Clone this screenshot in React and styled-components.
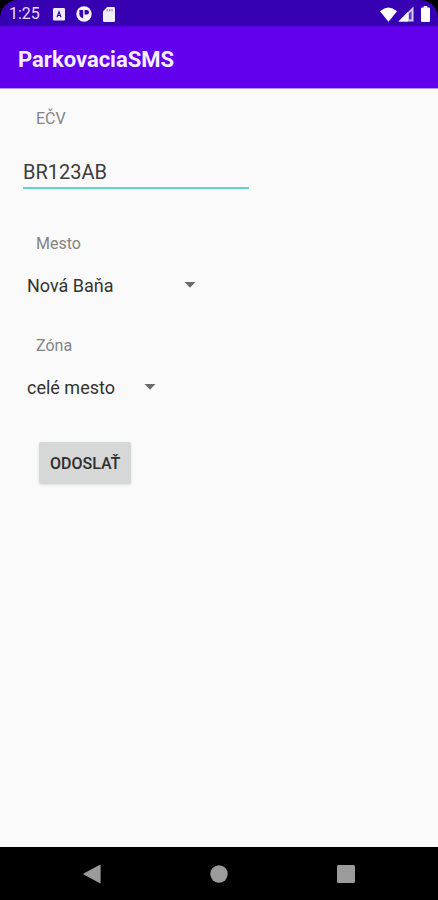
import React from "react";
import styled, { createGlobalStyle } from "styled-components";

const cities = ["Nová Baňa", "Bratislava", "Žilina"];
const zones = ["celé mesto"];

export const App = () => {
  const [plate, setPlate] = React.useState("BR123AB");
  const [city, setCity] = React.useState(cities[0]);
  const [zone, setZone] = React.useState(zones[0]);

  return (
    <Screen>
      <GlobalStyle />
      <StatusBar>
        <Clock>1:25</Clock>
        <Notifications>
          <KeyboardIcon />
          <PIcon />
          <SdCardIcon />
        </Notifications>
        <SystemIcons>
          <WifiIcon />
          <SignalIcon />
          <BatteryIcon />
        </SystemIcons>
      </StatusBar>
      <AppBar>
        <Title>ParkovaciaSMS</Title>
      </AppBar>

      <Form onSubmit={event => event.preventDefault()}>
        <Field>
          <Label htmlFor="plate">EČV</Label>
          <PlateInput
            id="plate"
            value={plate}
            onChange={event => setPlate(event.target.value)}
          />
        </Field>
        <Spinner
          id="city"
          label="Mesto"
          width="176px"
          options={cities}
          value={city}
          onChange={setCity}
        />
        <Spinner
          id="zone"
          label="Zóna"
          width="136px"
          options={zones}
          value={zone}
          onChange={setZone}
        />
        <SubmitButton type="submit">Odoslať</SubmitButton>
      </Form>

      <NavBar>
        <NavButton type="button" aria-label="Back">
          <svg width="20" height="20" viewBox="0 0 20 20">
            <path d="M18.600 1.2v17.6q0 .8-.7.4L1.6 10.5q-.8-.5 0-1L17.900.8q.7-.4.7.4z" />
          </svg>
        </NavButton>
        <NavButton type="button" aria-label="Home">
          <svg width="20" height="20" viewBox="0 0 20 20">
            <circle cx="10" cy="10" r="8.7" />
          </svg>
        </NavButton>
        <NavButton type="button" aria-label="Recent apps">
          <svg width="20" height="20" viewBox="0 0 20 20">
            <rect x="1" y="1" width="18" height="18" rx="1.6" />
          </svg>
        </NavButton>
      </NavBar>
    </Screen>
  );
};

export default App;

const Spinner = ({ id, label, width, options, value, onChange }) => (
  <Field>
    <Label htmlFor={id}>{label}</Label>
    <SelectWrap $width={width}>
      <Select
        id={id}
        value={value}
        onChange={event => onChange(event.target.value)}
      >
        {options.map(option => (
          <option key={option}>{option}</option>
        ))}
      </Select>
      <Arrow width="12" height="6" viewBox="0 0 12 6">
        <path d="M0.500 0h11L6 5.700z" />
      </Arrow>
    </SelectWrap>
  </Field>
);

/** Status bar icons */
const KeyboardIcon = () => (
  <svg width="12" height="13" viewBox="0 0 12 13">
    <rect width="12" height="12.500" rx="1.200" fill="#f1ecfb" />
    <path
      d="M4 9.300L6 3.700l2 5.600M4.700 7.500h2.600"
      fill="none"
      stroke="#3700b3"
      strokeWidth="1.100"
    />
  </svg>
);

const PIcon = () => (
  <svg width="16" height="16" viewBox="0 0 16 16">
    <circle cx="8" cy="8" r="7.700" fill="#f8f5ff" />
    <path d="M3.400 4h3.800v8.600A5 5 0 0 1 3.400 9z" fill="#3700b3" />
    <path d="M8.600 4h2.100a2.300 2.300 0 0 1 0 4.600H8.600z" fill="#3700b3" />
  </svg>
);

const SdCardIcon = () => (
  <svg width="12" height="15" viewBox="0 0 12 15">
    <path
      d="M4.200 0h6.600q1.200 0 1.200 1.200v12.600q0 1.200-1.200 1.200H1.200Q0 15 0 13.800V4.300z"
      fill="#f1ecfb"
    />
    <path
      d="M4.200 2.200v2.200M6.600 2.200v2.200M9 2.200v2.200"
      stroke="#3700b3"
      strokeOpacity="0.6"
    />
  </svg>
);

const WifiIcon = () => (
  <svg width="17" height="15" viewBox="0 0 17 15">
    <path d="M0 4.200Q8.500-3.200 17 4.200L8.500 14.800z" fill="#fff" />
  </svg>
);

const SignalIcon = () => (
  <svg width="16" height="16" viewBox="0 0 16 16">
    <path d="M.5 15.500l15-15v15z" fill="#d7cbf2" />
    <path d="M.5 15.500L10 6v9.500z" fill="#fff" />
    <path d="M11 7.500l2.500-2.500v8.500H11z" fill="#5b35bd" />
  </svg>
);

const BatteryIcon = () => (
  <svg width="9" height="16" viewBox="0 0 9 16">
    <path
      d="M2.700 0h3.600v1.500h1.500Q9 1.500 9 2.700v12Q9 16 7.800 16H1.200Q0 16 0 14.700v-12Q0 1.500 1.200 1.500h1.500z"
      fill="#fff"
    />
  </svg>
);

/** Styled components */
const GlobalStyle = createGlobalStyle`
  * {
    box-sizing: border-box;
  }

  body {
    margin: 0;
    background: #000;
    font-family: Roboto, sans-serif;
  }
`;

const Screen = styled.div`
  min-height: 100vh;
  display: flex;
  flex-direction: column;
  background: #000;
`;

const StatusBar = styled.div`
  display: flex;
  align-items: center;
  height: 26px;
  padding: 2px 8px 0 9px;
  border-radius: 18px 18px 0 0;
  background: #3700b3;
`;

const Clock = styled.span`
  color: #e6defa;
  font-size: 16px;
  line-height: 20px;
`;

const Notifications = styled.div`
  display: flex;
  align-items: center;
  gap: 11px;
  margin-left: 13px;
`;

const SystemIcons = styled.div`
  display: flex;
  align-items: center;
  gap: 1px;
  margin-left: auto;

  svg:last-child {
    margin-left: 6px;
  }
`;

const AppBar = styled.header`
  display: flex;
  align-items: center;
  height: 63px;
  padding: 6px 18px 0;
  background: #6200ee;
  border-bottom: 1px solid #b995f0;
`;

const Title = styled.h1`
  margin: 0;
  color: #f6f0ff;
  font-size: 22px;
  line-height: 28px;
  font-weight: 700;
`;

const Form = styled.form`
  flex: 1;
  display: flex;
  flex-direction: column;
  align-items: flex-start;
  gap: 38px;
  padding: 20px 22px;
  background: #fafafa;
`;

const Field = styled.div`
  display: flex;
  flex-direction: column;
  align-items: flex-start;
  gap: 20px;
`;

const Label = styled.label`
  margin-left: 14px;
  color: #848484;
  font-size: 16px;
  line-height: 20px;
`;

const PlateInput = styled.input`
  width: 226px;
  height: 40px;
  margin: 0 0 7px 1px;
  padding: 8px 0 0;
  border: none;
  border-bottom: 2px solid #5fd9c5;
  outline: none;
  background: transparent;
  color: #3c3c3c;
  font-family: inherit;
  font-size: 20px;
`;

const SelectWrap = styled.div`
  position: relative;
  width: ${props => props.$width};
  height: 24px;
`;

const Select = styled.select`
  appearance: none;
  width: 100%;
  height: 24px;
  padding: 0 30px 0 5px;
  border: none;
  background: transparent;
  color: #333;
  font-family: inherit;
  font-size: 18px;
  line-height: 24px;
`;

const Arrow = styled.svg`
  position: absolute;
  top: 8px;
  right: 2px;
  fill: #6b6b6b;
  pointer-events: none;
`;

const SubmitButton = styled.button`
  height: 42px;
  margin: 4px 0 0 17px;
  padding: 0 11px;
  border: none;
  border-radius: 2px;
  background: #d6d7d7;
  box-shadow: 0 1px 3px rgba(0, 0, 0, 0.12);
  color: #2e2e2e;
  font-family: inherit;
  font-size: 16px;
  font-weight: 500;
  text-transform: uppercase;
  cursor: pointer;
`;

const NavBar = styled.nav`
  display: flex;
  justify-content: center;
  height: 53px;
  background: #000;
`;

const NavButton = styled.button`
  display: flex;
  align-items: center;
  justify-content: center;
  width: 29%;
  padding: 0;
  border: none;
  background: none;
  fill: #9b9b9b;
  cursor: pointer;
`;
